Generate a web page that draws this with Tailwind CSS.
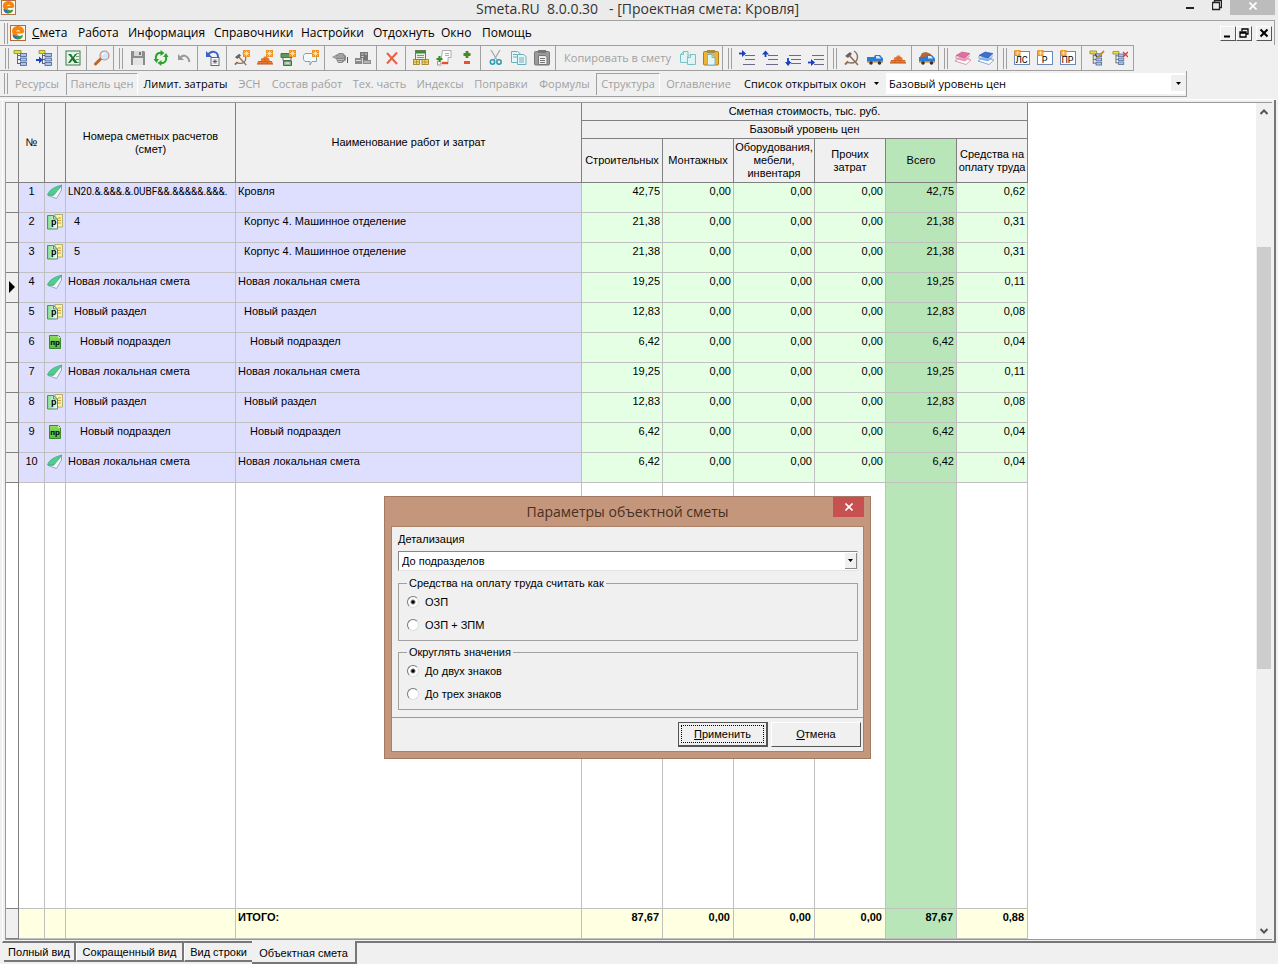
<!DOCTYPE html>
<html lang="ru">
<head>
<meta charset="utf-8">
<title>Smeta.RU 8.0.0.30 - [Проектная смета: Кровля]</title>
<script src="https://cdn.jsdelivr.net/npm/@tailwindcss/browser@4"></script>
</head>
<body class="h-screen flex flex-col overflow-hidden bg-[#f0f0f0] text-black font-['Open_Sans','Noto_Sans',sans-serif] text-[12px] leading-[16px]">

<svg class="absolute size-0" aria-hidden="true">
  <defs>
    <linearGradient id="gg" x1="0" x2="1"><stop offset="0" stop-color="#7fdc8c"/><stop offset="1" stop-color="#f4fff4"/></linearGradient>
    <linearGradient id="gd" x1="0" y1="0" x2="0" y2="1"><stop offset="0" stop-color="#8fdc5c"/><stop offset="1" stop-color="#4fbe4a"/></linearGradient>
  </defs>
  <symbol id="logo" viewBox="0 0 16 16"><rect x=".5" y=".5" width="15" height="15" fill="#fff6ea" stroke="#b5683a"/><path d="M3 9a5 5 0 0 0 10 1l-3 1-4-1z" fill="#3a9a4a"/><path d="M2.500 9.500a5 5 0 0 0 5 4.500l-1-3z" fill="#2d6fc0"/><path d="M2 6.500a6 5 0 0 1 12-1c1 2-1 3-3 3H7l1 2C4 11.500 2 9 2 6.500z" fill="#f58410"/><path d="M6 6.500c1-2 4-2 4 0z" fill="#ffe0a8"/></symbol>
  <symbol id="tree" viewBox="0 0 16 16"><path d="M1 .500h7v3H1z" fill="#e8e03a" stroke="#8a8620" stroke-width=".8"/><path d="M4.500 4v10M4.500 5.500H8M4.500 9.500H8M4.500 13.500H8" stroke="#666" fill="none"/><g fill="#a8c4ee" stroke="#4a6290" stroke-width=".8"><rect x="7.500" y="3.500" width="6" height="3"/><rect x="7.500" y="8" width="6" height="3"/><rect x="7.500" y="12.500" width="6" height="3"/></g></symbol>
  <symbol id="treein" viewBox="0 0 16 16"><path d="M3 .500h6v3H3z" fill="#e8e03a" stroke="#8a8620" stroke-width=".8"/><path d="M6.500 4v10M6.500 5.500H9M6.500 9.500H9M6.500 13.500H9" stroke="#666" fill="none"/><g fill="#a8c4ee" stroke="#4a6290" stroke-width=".8"><rect x="9" y="3.500" width="6.500" height="3"/><rect x="9" y="8" width="6.500" height="3"/><rect x="9" y="12.500" width="6.500" height="3"/></g><path d="M0 9h3V6.500L7 10l-4 3.500V11H0z" fill="#1747c8"/></symbol>
  <symbol id="xls" viewBox="0 0 16 16"><rect x="1" y="1" width="14" height="14" fill="#e8f3e8" stroke="#3c7a4c"/><path d="M11 3.500h3M11 6.500h3M11 9.500h3M11 12.500h3" stroke="#6aa878"/><path d="M3 4h3l2 3 2-3h2L9 8l4 5H9.500L7.500 10 5 13H3l3.500-5z" fill="#1a7431"/></symbol>
  <symbol id="mag" viewBox="0 0 16 16"><path d="M7 8.500 1.500 14" stroke="#c2622c" stroke-width="3" stroke-linecap="round"/><circle cx="10.500" cy="5.500" r="4.500" fill="#cfe6fb" stroke="#c98b78" stroke-width="1.200"/><path d="M8 5a3 3 0 0 1 3-2" stroke="#fff" fill="none" stroke-width="1.200"/></symbol>
  <symbol id="save" viewBox="0 0 16 16"><path d="M1 1h13l1 1v13H1z" fill="#8c8c8c"/><rect x="4" y="1" width="8" height="5" fill="#d8d8d8"/><rect x="9" y="2" width="2" height="3" fill="#777"/><rect x="3" y="8" width="10" height="7" fill="#e4e4e4"/></symbol>
  <symbol id="refresh" viewBox="0 0 16 16"><path d="M8 3H6C3 4 2.500 7 3 10M8 13h2c3-1 3.500-4 3-7" stroke="#2aa52a" stroke-width="2" fill="none"/><path d="M7.500 0l4 3-4 3zM8.500 10v6l-4-3zM.500 9h5.500l-2.500 4zM10 7h5.500L13 3z" fill="#2aa52a"/></symbol>
  <symbol id="undo" viewBox="0 0 16 16"><path d="M4 8c3-4 8-3 9.500 4" stroke="#999" stroke-width="2" fill="none"/><path d="M2 4v6h6z" fill="#999"/></symbol>
  <symbol id="undob" viewBox="0 0 16 16"><path d="M3 5c3-5 10-4 10 2" stroke="#3b62c5" stroke-width="2" fill="none"/><path d="M1 1v6h6z" fill="#3b62c5"/><rect x="6" y="7.500" width="8" height="8" fill="#fff" stroke="#667"/><path d="M8 9.500l4 4M12 9.500l-4 4M10 9v5M7.500 11.500h5" stroke="#445" stroke-width=".7"/></symbol>
  <symbol id="star" viewBox="0 0 6 6"><rect width="6" height="6" fill="#f0921e"/><path d="M3 .500v5M.500 3h5M1.200 1.200l3.600 3.600M4.800 1.200 1.200 4.800" stroke="#fff3c8" stroke-width=".6"/></symbol>
  <symbol id="hammer" viewBox="0 0 16 16"><path d="M4 4l10 11" stroke="#a8673a" stroke-width="1.600"/><path d="M1 6l5-4 2 2-4 4z" fill="#666"/><path d="M10 1c5 3 5 12-3 12-2 0-3 0-4-1.500" stroke="#777" stroke-width="1.400" fill="none"/><path d="M4 11.500l-3 3" stroke="#a8673a" stroke-width="2"/></symbol>
  <symbol id="hammern" viewBox="0 0 16 16"><use href="#hammer" y="2" width="14" height="14"/><use href="#star" x="9" width="7" height="7"/></symbol>
  <symbol id="bricks" viewBox="0 0 16 16"><path d="M0 13l1-3h2.500l1-2.500H6l1-2h3l1 2h1l1 2.500h2l1 3z" fill="#ee7e34"/><path d="M1 10.500h14M4 8h8M5 10.500V13M10 10.500V13M8 8v2.500" stroke="#b8501a" stroke-width=".6"/><path d="M0 13h16" stroke="#b8501a"/></symbol>
  <symbol id="bricksn" viewBox="0 0 16 16"><use href="#bricks" y="1" width="16" height="16"/><use href="#star" x="9" width="7" height="7"/></symbol>
  <symbol id="cabn" viewBox="0 0 16 16"><path d="M1 3.500h11v4H1z" fill="#5a9860" stroke="#456f4c"/><path d="M3 7.500h8v3H3z" fill="#f4f4e0" stroke="#667"/><path d="M3.500 11h8v4.500h-8z" fill="#84b888" stroke="#456f4c"/><path d="M5.500 13h4" stroke="#fff"/><use href="#star" x="9" width="7" height="7"/></symbol>
  <symbol id="msgn" viewBox="0 0 16 16"><path d="M2 3.500h11.500v8H9l-2 3.500v-3.500H2l-1.500-2v-4z" fill="#f3fafd" stroke="#7aa6b5"/><use href="#star" x="9" width="7" height="7"/></symbol>
  <symbol id="gray1" viewBox="0 0 16 16"><path d="M0 7l4-2 3-2h4l3 3v4l-4 3H6L4 9z" fill="#888"/><path d="M2 7h10M6 5h5M5 9.500h7M6 11.500h4" stroke="#ccc" stroke-width=".8"/><path d="M15.500 7v6" stroke="#555"/></symbol>
  <symbol id="gray2" viewBox="0 0 16 16"><path d="M5 2h8v8H5z" fill="#777"/><path d="M0 8h7v6H0zM8 10h8v4H8z" fill="#8c8c8c"/><path d="M6.500 4h2M10 4h2M6.500 6.500h2M1 10.500h5M9 12h6M7.500 8v6" stroke="#ddd"/></symbol>
  <symbol id="del" viewBox="0 0 16 16"><path d="M3 3l10 11M13 2.500 3 13.500" stroke="#ea6040" stroke-width="2"/></symbol>
  <symbol id="calc" viewBox="0 0 16 16"><rect x="2.500" y=".500" width="10" height="9" fill="#e9f2e4" stroke="#6a7a52"/><path d="M3 1h9v2.500H3z" fill="#3c8a3c"/><path d="M4 5.500h7M4 7.500h7" stroke="#889"/><g fill="#f3d96a" stroke="#9a7420" stroke-width=".8"><rect x=".500" y="9.500" width="6" height="5"/><rect x="9" y="9.500" width="6.500" height="5"/></g><path d="M1 12h5M9.500 12H15M3.500 10v4M12 10v4" stroke="#9a7420" stroke-width=".6"/></symbol>
  <symbol id="pmdoc" viewBox="0 0 16 16"><path d="M6.500.500H15v7h-3v6H4.500z" fill="#fff" stroke="#999" stroke-width=".8"/><path d="M9 3.500h4M9 5.500h4" stroke="#aac"/><path d="M3.500 6v6M.500 9h6" stroke="#3f8a22" stroke-width="2.200"/><path d="M6 13h6" stroke="#ea5030" stroke-width="2.400"/><path d="M1.500 11v4h4" stroke="#999" fill="none"/></symbol>
  <symbol id="pm" viewBox="0 0 16 16"><path d="M8 1v7M4.500 4.500h7" stroke="#4a8a22" stroke-width="2.800"/><path d="M5 12.500h6" stroke="#ea5030" stroke-width="3"/></symbol>
  <symbol id="cut" viewBox="0 0 16 16"><path d="M3 0l6 10M12 0 6 10" stroke="#a0adb2" stroke-width="1.300"/><circle cx="4.500" cy="12" r="2.200" fill="none" stroke="#2a9ab0" stroke-width="1.500"/><circle cx="11" cy="12" r="2.200" fill="none" stroke="#2a9ab0" stroke-width="1.500"/></symbol>
  <symbol id="copy" viewBox="0 0 16 16"><g fill="#e4f6f8" stroke="#6ab0ba"><path d="M.500 1.500h6l2.500 2v9H.500z"/><path d="M6.500 4.500h6l2.500 2v8H6.500z"/></g><path d="M2 4.500h4M2 7h4M8 8h5M8 10h5M8 12h5" stroke="#6ab0ba"/></symbol>
  <symbol id="copy2" viewBox="0 0 16 16"><g fill="#dff5f5" stroke="#7ac0c4"><path d="M3.500 1.500H8v11H.500v-8z"/><path d="M10 4.500h5.500v10h-8V7z"/></g><path d="M3.500 1.500v3h-3M10.500 4.500V7.500h-3" stroke="#7ac0c4" fill="none"/></symbol>
  <symbol id="pasteg" viewBox="0 0 16 16"><rect x=".500" y="1.500" width="15" height="13.500" rx="1" fill="#9a9a9a" stroke="#777"/><rect x="4" y="0" width="8" height="3" fill="#777"/><path d="M4.500 5.500h7l1.500 2v7H4.500z" fill="#eee" stroke="#777"/><path d="M6 8.500h5M6 10.500h5M6 12.500h5" stroke="#777"/></symbol>
  <symbol id="pastey" viewBox="0 0 16 16"><rect x=".500" y="1.500" width="15" height="13.500" rx="1" fill="#eeb43a" stroke="#b07c1c"/><rect x="4" y="0" width="8" height="3" fill="#a88a4a"/><path d="M4.500 4.500H9l3 3v7.500H4.500z" fill="#e2f6f6" stroke="#7ab8bc"/><path d="M9 4.500v3h3" fill="none" stroke="#7ab8bc"/></symbol>
  <symbol id="lines" viewBox="0 0 16 16"><path d="M6 5.500h10M6 9.500h10M4 14.500h12" stroke="#6a6a8a"/></symbol>
  <symbol id="l1" viewBox="0 0 16 16"><use href="#lines" width="16" height="16"/><path d="M0 3.500h4" stroke="#1a3fc0" stroke-width="1.800"/><path d="M3 0l4 3.500L3 7z" fill="#1a3fc0"/></symbol>
  <symbol id="l2" viewBox="0 0 16 16"><use href="#lines" width="16" height="16"/><path d="M3.500 3v4" stroke="#1a3fc0" stroke-width="1.800"/><path d="M0 4.500 3.500.500 7 4.500z" fill="#1a3fc0"/></symbol>
  <symbol id="l3" viewBox="0 0 16 16"><path d="M4 5.500h12M6 9.500h10M6 13.500h10" stroke="#6a6a8a"/><path d="M5 12H3V8" stroke="#1a3fc0" stroke-width="1.800" fill="none"/><path d="M0 12h6.500L3 16z" fill="#1a3fc0"/></symbol>
  <symbol id="l4" viewBox="0 0 16 16"><path d="M4 5.500h12M6 9.500h10M6 14.500h10" stroke="#6a6a8a"/><path d="M0 12.500h4" stroke="#1a3fc0" stroke-width="1.800"/><path d="M3 9l4 3.500L3 16z" fill="#1a3fc0"/></symbol>
  <symbol id="truck" viewBox="0 0 16 16"><path d="M0 7h7l1-2h5l3 3.500V12H0z" fill="#2f7ad0"/><path d="M9 6h3l2 2.500H9z" fill="#d4ecff"/><path d="M0 12h16" stroke="#e09c3a" stroke-width="1.500"/><circle cx="4" cy="13" r="1.800" fill="#333"/><circle cx="12.500" cy="13" r="1.800" fill="#333"/></symbol>
  <symbol id="truckb" viewBox="0 0 16 16"><path d="M1 7l2-4 4-1 5 2v3z" fill="#b3683a"/><use href="#truck" width="16" height="16"/></symbol>
  <symbol id="bookp" viewBox="0 0 16 16"><path d="M0 11l5-3 11 2-5 4.500z" fill="#fff" stroke="#d080a0" stroke-width=".8"/><path d="M0 9l6-2.500L15 8l-5 3.500z" fill="#f0a8c0"/><path d="M1 5.500 7 2l8 1.500-5 4.500z" fill="#e070a0" stroke="#c05080" stroke-width=".6"/><path d="M1 6v2l9 2.500 5-5" fill="none" stroke="#d890b0"/></symbol>
  <symbol id="bookb" viewBox="0 0 16 16"><path d="M0 11l5-3 11 2-5 4.500z" fill="#fff" stroke="#6a94d0" stroke-width=".8"/><path d="M0 9l6-2.500L15 8l-5 3.500z" fill="#90c0f0"/><path d="M1 5.500 7 2l8 1.500-5 4.500z" fill="#3a70d0" stroke="#2a50a8" stroke-width=".6"/><path d="M1 6v2l9 2.500 5-5" fill="none" stroke="#80a8e0"/></symbol>
  <symbol id="frame" viewBox="0 0 16 16"><rect x=".500" y="1.500" width="15" height="13" fill="#fff" stroke="#6a88b8"/><use href="#star" width="7" height="6"/></symbol>
  <symbol id="treee" viewBox="0 0 16 16"><use href="#tree" width="15" height="16"/><path d="M15 1 9 7l-1 1.500" stroke="#c98a2a" stroke-width="1.800" fill="none"/><path d="M6 4l2 3" stroke="#333"/></symbol>
  <symbol id="treex" viewBox="0 0 16 16"><use href="#tree" width="14" height="16"/><path d="M11 2l5 5M16 2l-5 5" stroke="#e03a3a" stroke-width="1.400"/></symbol>
  <symbol id="smeta" viewBox="0 0 16 16"><path d="M.500 11C2 6 7 3 15 1L7 11z" fill="#4fcf8c" stroke="#2a9a68" stroke-width=".6"/><path d="M1 11.500h5.500L14.500 2v4L9.500 14.500z" fill="#f4f9fc" stroke="#7a9aa8" stroke-width=".8"/></symbol>
  <symbol id="razdel" viewBox="0 0 16 16"><rect x="8" y=".500" width="7.500" height="12.500" fill="#fbf3a0" stroke="#a8a468" stroke-width=".8"/><path d="M11 4h3M11 6.500h3M11 9h3" stroke="#c8a040"/><path d="M.500 1.500h6l4 3.500v10H.500z" fill="url(#gg)" stroke="#5a8a70"/><path d="M6.500 1.500V5h4" fill="none" stroke="#5a8a70"/></symbol>
  <symbol id="podrazdel" viewBox="0 0 16 16"><path d="M2.500 1.500h9l2 2v11h-11z" fill="url(#gd)" stroke="#3c8a30"/><path d="M11.500 1.500v2h2" fill="none" stroke="#d8f8c0"/></symbol>
</svg>

<header class="h-5 shrink-0 flex items-start bg-[#ebebeb] pl-px">
  <svg class="size-[15px] shrink-0"><use href="#logo"/></svg>
  <h1 class="flex-1 text-center text-[14px] leading-[17px] text-[#333] whitespace-pre pl-[82px] font-normal">Smeta.RU  8.0.0.30   - [Проектная смета: Кровля]</h1>
  <div class="flex h-[15px] pr-[3px] shrink-0">
    <button aria-label="Свернуть" class="w-[26px] flex justify-center items-end pb-[6px]"><span class="w-2 h-[2px] bg-[#222]"></span></button>
    <button aria-label="Восстановить" class="w-[27px] flex justify-center items-center pb-1"><svg class="w-[10px] h-[11px]" viewBox="0 0 10 11"><path d="M2.500 2V.500h7v7H8M.500 2.500h7v7h-7z" fill="none" stroke="#222" stroke-width="1.300"/></svg></button>
    <button aria-label="Закрыть" class="w-[45px] bg-[#bcbcbc] flex justify-center items-center pb-1"><svg class="size-2" viewBox="0 0 8 8"><path d="M.500.500l7 7M7.500.500l-7 7" stroke="#fff" stroke-width="1.600"/></svg></button>
  </div>
</header>

<nav class="h-[25px] shrink-0 flex items-center border-t border-[#a0a0a0] mr-[3px] border-r pl-1">
  <span class="w-1 h-[21px] border-x border-[#a0a0a0] mr-[2px]"></span>
  <svg class="size-4 mr-[6px]"><use href="#logo"/></svg>
  <div class="flex gap-3 text-[12px]">
    <button class="w-[34px] whitespace-nowrap"><u>С</u>мета</button>
    <button class="w-[38px] whitespace-nowrap">Работа</button>
    <button class="w-[74px] whitespace-nowrap">Информация</button>
    <button class="w-[75px] whitespace-nowrap">Справочники</button>
    <button class="w-[60px] whitespace-nowrap">Настройки</button>
    <button class="w-[56px] whitespace-nowrap">Отдохнуть</button>
    <button class="w-[29px] whitespace-nowrap">Окно</button>
    <button class="w-[49px] whitespace-nowrap">Помощь</button>
  </div>
  <div class="ml-auto flex pr-[2px] [&>button]:w-4 [&>button]:h-[15px] [&>button]:border [&>button]:border-t-white [&>button]:border-l-white [&>button]:border-r-[#555] [&>button]:border-b-[#555] [&>button]:flex [&>button]:items-center [&>button]:justify-center">
    <button aria-label="Свернуть окно"><svg class="size-[10px]" viewBox="0 0 10 10"><path d="M1 8.500h6" stroke="#000" stroke-width="2"/></svg></button>
    <button aria-label="Восстановить окно"><svg class="size-[10px]" viewBox="0 0 10 10"><path d="M3 3V1h6v5H7M1 4h6v5H1zM1 5h6" fill="none" stroke="#000" stroke-width="1.300"/></svg></button>
    <button aria-label="Закрыть окно" class="ml-1"><svg class="size-[10px]" viewBox="0 0 10 10"><path d="M1.500 1.500l7 7M8.500 1.500l-7 7" stroke="#000" stroke-width="2"/></svg></button>
  </div>
</nav>

<div class="h-[26px] shrink-0 self-start flex border-y border-[#a0a0a0] border-r pr-[2px] text-[11px] [&_button]:w-[23px] [&_button]:shrink-0 [&_button]:flex [&_button]:items-center [&_button]:justify-center [&_svg]:size-4 [&>i]:w-px [&>i]:shrink-0 [&>i]:ml-[2px] [&>i]:mr-[3px] [&>i]:bg-[#a0a0a0] [&>b]:w-[13px] [&>b]:shrink-0 [&>b]:border-l [&>b]:border-[#a0a0a0] [&>b]:flex [&>b]:items-center [&>b]:pl-[5px] [&>b>span]:w-1 [&>b>span]:h-[21px] [&>b>span]:border-x [&>b>span]:border-[#a0a0a0]">
  <b class="-ml-px"><span></span></b>
  <button aria-label="Дерево" class="-ml-[3px]"><svg><use href="#tree"/></svg></button>
  <button aria-label="Перейти в дерево"><svg><use href="#treein"/></svg></button>
  <i></i>
  <button aria-label="Excel"><svg><use href="#xls"/></svg></button>
  <i></i>
  <button aria-label="Поиск"><svg><use href="#mag"/></svg></button>
  <b><span></span></b>
  <button aria-label="Сохранить"><svg><use href="#save"/></svg></button>
  <button aria-label="Обновить"><svg><use href="#refresh"/></svg></button>
  <button aria-label="Отменить"><svg><use href="#undo"/></svg></button>
  <i></i>
  <button aria-label="Откат"><svg><use href="#undob"/></svg></button>
  <i></i>
  <button aria-label="Новая расценка"><svg><use href="#hammern"/></svg></button>
  <button aria-label="Новый материал"><svg><use href="#bricksn"/></svg></button>
  <button aria-label="Новое оборудование"><svg><use href="#cabn"/></svg></button>
  <button aria-label="Новый комментарий"><svg><use href="#msgn"/></svg></button>
  <i></i>
  <button aria-label="Замена"><svg><use href="#gray1"/></svg></button>
  <button aria-label="Группа"><svg><use href="#gray2"/></svg></button>
  <i></i>
  <button aria-label="Удалить"><svg><use href="#del"/></svg></button>
  <i></i>
  <button aria-label="Расчёт"><svg><use href="#calc"/></svg></button>
  <button aria-label="Изменить"><svg><use href="#pmdoc"/></svg></button>
  <button aria-label="Плюс минус"><svg><use href="#pm"/></svg></button>
  <i></i>
  <button aria-label="Вырезать"><svg><use href="#cut"/></svg></button>
  <button aria-label="Копировать"><svg><use href="#copy"/></svg></button>
  <button aria-label="Вставить"><svg><use href="#pasteg"/></svg></button>
  <i></i>
  <div class="w-[117px] shrink-0 flex items-center justify-center whitespace-nowrap text-[#a0a0a0]">Копировать в смету</div>
  <button aria-label="Копия"><svg><use href="#copy2"/></svg></button>
  <button aria-label="Вставка"><svg><use href="#pastey"/></svg></button>
  <b><span></span></b>
  <button aria-label="Вправо выше"><svg><use href="#l1"/></svg></button>
  <button aria-label="Вверх"><svg><use href="#l2"/></svg></button>
  <button aria-label="Вниз"><svg><use href="#l3"/></svg></button>
  <button aria-label="Вправо ниже"><svg><use href="#l4"/></svg></button>
  <b><span></span></b>
  <button aria-label="Работы"><svg><use href="#hammer"/></svg></button>
  <button aria-label="Машины"><svg><use href="#truck"/></svg></button>
  <button aria-label="Материалы"><svg><use href="#bricks"/></svg></button>
  <i></i>
  <button aria-label="Перевозка"><svg><use href="#truckb"/></svg></button>
  <b><span></span></b>
  <button aria-label="Справочник 1"><svg><use href="#bookp"/></svg></button>
  <button aria-label="Справочник 2"><svg><use href="#bookb"/></svg></button>
  <b><span></span></b>
  <button aria-label="Локальная смета" class="relative"><svg><use href="#frame"/></svg><span class="absolute bottom-[5px] inset-x-0 text-center text-[9px] leading-[10px] font-[Roboto]">ЛС</span></button>
  <button aria-label="Раздел" class="relative"><svg><use href="#frame"/></svg><span class="absolute bottom-[5px] inset-x-0 text-center text-[9px] leading-[10px] font-[Roboto]">Р</span></button>
  <button aria-label="Подраздел" class="relative"><svg><use href="#frame"/></svg><span class="absolute bottom-[5px] inset-x-0 text-center text-[9px] leading-[10px] font-[Roboto]">ПР</span></button>
  <i></i>
  <button aria-label="Правка структуры"><svg><use href="#treee"/></svg></button>
  <button aria-label="Удалить структуру"><svg><use href="#treex"/></svg></button>
</div>

<div class="h-[26px] shrink-0 flex items-center border-b border-r border-[#a0a0a0] w-[1187px] pl-1 text-[11px] text-[#a0a0a0] [&>button]:shrink-0 [&>button]:whitespace-nowrap [&>button]:h-[22px]">
  <span class="w-1 h-[21px] border-x border-[#a0a0a0] shrink-0"></span>
  <button class="w-[58px]">Ресурсы</button>
  <button class="w-[72px] border-t border-l border-[#a0a0a0] border-r border-r-white">Панель цен</button>
  <button class="w-[95px] text-black">Лимит. затраты</button>
  <button class="w-[33px]">ЭСН</button>
  <button class="w-[82px]">Состав работ</button>
  <button class="w-[63px]">Тех. часть</button>
  <button class="w-[58px]">Индексы</button>
  <button class="w-[64px]">Поправки</button>
  <button class="w-[63px]">Формулы</button>
  <button class="w-[64px] border-t border-l border-[#a0a0a0] border-r border-r-white">Структура</button>
  <button class="w-[77px]">Оглавление</button>
  <button class="w-[149px] text-black flex items-center justify-center gap-2">Список открытых окон<svg class="w-[5px] h-[3px]" viewBox="0 0 5 3"><path d="M0 0h5L2.500 3z"/></svg></button>
  <div class="relative flex-1 h-[21px] mr-[1px]">
    <select aria-label="Уровень цен" class="appearance-none w-full h-full bg-white text-black pl-[3px] outline-none"><option>Базовый уровень цен</option></select>
    <span class="absolute right-0 top-[2px] w-[14px] h-4 bg-[#f0f0f0] flex items-center justify-center pointer-events-none"><svg class="w-[5px] h-[3px]" viewBox="0 0 5 3"><path d="M0 0h5L2.500 3z" fill="#000"/></svg></span>
  </div>
</div>

<main class="flex-1 min-h-0 flex flex-col mt-[2px] border-t border-white mr-[2px] font-['Liberation_Sans',Arial,sans-serif] text-[11px] leading-[13px]">
  <div class="flex-1 min-h-0 flex ml-[2px] border-l border-white border-r-2 border-r-[#777] border-b-2 border-b-[#777]">
    <div class="flex-1 min-w-0 flex mt-[2px] ml-[2px] mr-[2px] mb-px border border-[#999] border-r-0 bg-white">
      <div class="flex-1 min-w-0 overflow-hidden">
        <table class="h-full w-[1022px] table-fixed border-separate border-spacing-0 [&_td]:border-r [&_td]:border-b [&_td]:border-[#c0c0c0] [&_td]:align-top [&_td]:px-[2px] [&_td]:pt-[2px] [&_td]:whitespace-nowrap [&_td]:overflow-hidden [&_th]:font-normal [&_th]:border-r [&_th]:border-b [&_th]:border-[#808080] [&_th]:bg-[#f0f0f0] [&_th]:p-0 [&_tr>td:first-child]:bg-[#f0f0f0] [&_tr>td:first-child]:border-[#808080] [&_.r>td:nth-child(2)]:text-center [&_.r>td:nth-child(3)]:p-0 [&_.r>td:nth-child(3)]:pt-px [&_.r>td:nth-child(-n+5)]:bg-[#dedeff] [&_.r>td:first-child]:bg-[#f0f0f0]! [&_.r>td:nth-child(n+6)]:bg-[#e4ffe4] [&_.r>td:nth-child(n+6)]:text-right [&_tr>td:nth-child(10)]:bg-[#b9e6b9]! [&_td_svg]:mx-auto [&_td_svg]:size-4">
          <colgroup><col class="w-[13px]"><col class="w-[26px]"><col class="w-[21px]"><col class="w-[170px]"><col class="w-[346px]"><col class="w-[81px]"><col class="w-[71px]"><col class="w-[81px]"><col class="w-[71px]"><col class="w-[71px]"><col class="w-[71px]"></colgroup>
          <thead>
            <tr class="h-[18px]"><th rowspan="3"></th><th rowspan="3">№</th><th rowspan="3"></th><th rowspan="3">Номера сметных расчетов<br>(смет)</th><th rowspan="3">Наименование работ и затрат</th><th colspan="6">Сметная стоимость, тыс. руб.</th></tr>
            <tr class="h-[18px]"><th colspan="6">Базовый уровень цен</th></tr>
            <tr class="h-[44px]"><th>Строительных</th><th>Монтажных</th><th>Оборудования,<br>мебели,<br>инвентаря</th><th>Прочих<br>затрат</th><th><div class="h-[43px] bg-[#b9e6b9] flex items-center justify-center">Всего</div></th><th>Средства на<br>оплату труда</th></tr>
          </thead>
          <tbody>
            <tr class="r h-[30px]"><td></td><td>1</td><td><svg><use href="#smeta"/></svg></td><td class="font-[Roboto] text-[10px]">LN20.&amp;.&amp;&amp;&amp;.&amp;.0UBF&amp;&amp;.&amp;&amp;&amp;&amp;&amp;.&amp;&amp;&amp;.</td><td>Кровля</td><td>42,75</td><td>0,00</td><td>0,00</td><td>0,00</td><td>42,75</td><td>0,62</td></tr>
            <tr class="r h-[30px]"><td></td><td>2</td><td><div class="relative"><svg><use href="#razdel"/></svg><span class="absolute left-[6px] top-[3px] text-[9px] leading-[11px] font-bold">р</span></div></td><td><span class="pl-[6px]">4</span></td><td><span class="pl-[6px]">Корпус 4. Машинное отделение</span></td><td>21,38</td><td>0,00</td><td>0,00</td><td>0,00</td><td>21,38</td><td>0,31</td></tr>
            <tr class="r h-[30px]"><td></td><td>3</td><td><div class="relative"><svg><use href="#razdel"/></svg><span class="absolute left-[6px] top-[3px] text-[9px] leading-[11px] font-bold">р</span></div></td><td><span class="pl-[6px]">5</span></td><td><span class="pl-[6px]">Корпус 4. Машинное отделение</span></td><td>21,38</td><td>0,00</td><td>0,00</td><td>0,00</td><td>21,38</td><td>0,31</td></tr>
            <tr class="r h-[30px]"><td><svg class="mt-1 w-[6px]!" viewBox="0 0 6 16"><path d="M0 2v12l6-6z"/></svg></td><td>4</td><td><svg><use href="#smeta"/></svg></td><td>Новая локальная смета</td><td>Новая локальная смета</td><td>19,25</td><td>0,00</td><td>0,00</td><td>0,00</td><td>19,25</td><td>0,11</td></tr>
            <tr class="r h-[30px]"><td></td><td>5</td><td><div class="relative"><svg><use href="#razdel"/></svg><span class="absolute left-[6px] top-[3px] text-[9px] leading-[11px] font-bold">р</span></div></td><td><span class="pl-[6px]">Новый раздел</span></td><td><span class="pl-[6px]">Новый раздел</span></td><td>12,83</td><td>0,00</td><td>0,00</td><td>0,00</td><td>12,83</td><td>0,08</td></tr>
            <tr class="r h-[30px]"><td></td><td>6</td><td><div class="relative"><svg><use href="#podrazdel"/></svg><span class="absolute inset-x-0 text-center top-[3px] text-[8px] leading-[11px] font-bold">пр</span></div></td><td><span class="pl-3">Новый подраздел</span></td><td><span class="pl-3">Новый подраздел</span></td><td>6,42</td><td>0,00</td><td>0,00</td><td>0,00</td><td>6,42</td><td>0,04</td></tr>
            <tr class="r h-[30px]"><td></td><td>7</td><td><svg><use href="#smeta"/></svg></td><td>Новая локальная смета</td><td>Новая локальная смета</td><td>19,25</td><td>0,00</td><td>0,00</td><td>0,00</td><td>19,25</td><td>0,11</td></tr>
            <tr class="r h-[30px]"><td></td><td>8</td><td><div class="relative"><svg><use href="#razdel"/></svg><span class="absolute left-[6px] top-[3px] text-[9px] leading-[11px] font-bold">р</span></div></td><td><span class="pl-[6px]">Новый раздел</span></td><td><span class="pl-[6px]">Новый раздел</span></td><td>12,83</td><td>0,00</td><td>0,00</td><td>0,00</td><td>12,83</td><td>0,08</td></tr>
            <tr class="r h-[30px]"><td></td><td>9</td><td><div class="relative"><svg><use href="#podrazdel"/></svg><span class="absolute inset-x-0 text-center top-[3px] text-[8px] leading-[11px] font-bold">пр</span></div></td><td><span class="pl-3">Новый подраздел</span></td><td><span class="pl-3">Новый подраздел</span></td><td>6,42</td><td>0,00</td><td>0,00</td><td>0,00</td><td>6,42</td><td>0,04</td></tr>
            <tr class="r h-[30px]"><td></td><td>10</td><td><svg><use href="#smeta"/></svg></td><td>Новая локальная смета</td><td>Новая локальная смета</td><td>6,42</td><td>0,00</td><td>0,00</td><td>0,00</td><td>6,42</td><td>0,04</td></tr>
            <tr><td class="bg-white!"></td><td></td><td></td><td></td><td></td><td></td><td></td><td></td><td></td><td></td><td></td></tr>
          </tbody>
          <tfoot>
            <tr class="h-[30px] font-bold bg-[#ffffe1] [&>td:nth-child(n+6)]:text-right [&>td:nth-child(n+6)]:pr-[3px]"><td></td><td></td><td></td><td></td><td>ИТОГО:</td><td>87,67</td><td>0,00</td><td>0,00</td><td>0,00</td><td>87,67</td><td>0,88</td></tr>
          </tfoot>
        </table>
      </div>
      <div class="w-4 shrink-0 bg-[#f0f0f0] flex flex-col items-center">
        <button aria-label="Прокрутить вверх" class="h-[17px] flex items-center"><svg class="w-2 h-[6px]" viewBox="0 0 8 6"><path d="M.500 5 4 1.500 7.500 5" fill="none" stroke="#555" stroke-width="2"/></svg></button>
        <div class="flex-1 w-full flex flex-col"><div class="grow-[127]"></div><div class="grow-[421] mx-px bg-[#cdcdcd]"></div><div class="grow-[253]"></div></div>
        <button aria-label="Прокрутить вниз" class="h-[17px] flex items-center"><svg class="w-2 h-[6px]" viewBox="0 0 8 6"><path d="M.500 1 4 4.500 7.500 1" fill="none" stroke="#555" stroke-width="2"/></svg></button>
      </div>
    </div>
  </div>
  <div role="tablist" class="h-[21px] shrink-0 flex items-start pl-1 [&>button]:whitespace-nowrap [&>button]:border-r-2 [&>button]:border-b-2 [&>button]:border-[#777] [&>button]:h-[19px] [&>button]:pt-px">
    <button role="tab" class="w-[72px]">Полный вид</button>
    <button role="tab" class="w-[108px] border-l border-l-white!">Сокращенный вид</button>
    <button role="tab" class="w-[68px] border-r-0! border-l border-l-white!">Вид строки</button>
    <button role="tab" aria-selected="true" class="w-[105px] h-[23px]! -mt-[2px] pt-1! bg-[#f0f0f0] relative">Объектная смета</button>
  </div>
</main>

<div role="dialog" aria-labelledby="dt" class="absolute left-[384px] top-[496px] w-[487px] bg-[#c4967b] border border-[#a27a64] px-[6px] pb-[6px] font-['Liberation_Sans',Arial,sans-serif] text-[11px] leading-[13px]">
  <h2 id="dt" class="h-[29px] text-center text-[14px] leading-[29px] text-[#48301f] font-normal font-['Open_Sans','Noto_Sans',sans-serif]">Параметры объектной сметы</h2>
  <button aria-label="Закрыть диалог" class="absolute right-[6px] top-0 w-[31px] h-5 bg-[#c75050] flex items-center justify-center"><svg class="size-2" viewBox="0 0 8 8"><path d="M.500.500l7 7M7.500.500l-7 7" stroke="#fff" stroke-width="1.600"/></svg></button>
  <form class="bg-[#f0f0f0] border border-[#a98068]">
    <div class="pl-[6px] pr-[5px] pt-[6px] pb-[7px] flex flex-col">
      <label for="det">Детализация</label>
      <div class="relative mt-[5px] h-5">
        <select id="det" class="appearance-none w-full h-full bg-white border border-t-[#888] border-l-[#888] border-r-[#e3e3e3] border-b-[#e3e3e3] pl-[3px] outline-none"><option>До подразделов</option></select>
        <span class="absolute right-px top-[2px] w-3 h-4 bg-[#f0f0f0] border-r border-b border-[#888] flex items-center justify-center pointer-events-none"><svg class="w-[5px] h-[3px]" viewBox="0 0 5 3"><path d="M0 0h5L2.500 3z"/></svg></span>
      </div>
      <fieldset class="mt-[6px] h-16 border border-[#a0a0a0] pl-2">
        <legend class="px-[2px]">Средства на оплату труда считать как</legend>
        <label class="flex items-center gap-[6px] h-[23px] pt-px"><input type="radio" name="pay" checked class="appearance-none size-3 rounded-full bg-white border border-t-[#777] border-l-[#777] border-r-[#ddd] border-b-[#ddd] checked:bg-[radial-gradient(circle,#000_0_1px,#fff_3px)]">ОЗП</label>
        <label class="flex items-center gap-[6px] h-[23px] pt-px"><input type="radio" name="pay" class="appearance-none size-3 rounded-full bg-white border border-t-[#777] border-l-[#777] border-r-[#ddd] border-b-[#ddd] checked:bg-[radial-gradient(circle,#000_0_1px,#fff_3px)]">ОЗП + ЗПМ</label>
      </fieldset>
      <fieldset class="mt-[5px] h-16 border border-[#a0a0a0] pl-2">
        <legend class="px-[2px]">Округлять значения</legend>
        <label class="flex items-center gap-[6px] h-[23px] pt-px"><input type="radio" name="rnd" checked class="appearance-none size-3 rounded-full bg-white border border-t-[#777] border-l-[#777] border-r-[#ddd] border-b-[#ddd] checked:bg-[radial-gradient(circle,#000_0_1px,#fff_3px)]">До двух знаков</label>
        <label class="flex items-center gap-[6px] h-[23px] pt-px"><input type="radio" name="rnd" class="appearance-none size-3 rounded-full bg-white border border-t-[#777] border-l-[#777] border-r-[#ddd] border-b-[#ddd] checked:bg-[radial-gradient(circle,#000_0_1px,#fff_3px)]">До трех знаков</label>
      </fieldset>
    </div>
    <div class="border-t border-[#999] flex justify-end gap-[3px] pt-1 pr-[2px] pb-[4px]">
      <button type="button" class="w-[90px] h-[25px] border border-[#555] border-r-2 border-b-2 p-[2px]"><span class="flex h-full items-center justify-center border border-dotted border-black"><span><u>П</u>рименить</span></span></button>
      <button type="button" class="w-[90px] h-[25px] border border-t-white border-l-white border-r-[#555] border-b-[#555]"><u>О</u>тмена</button>
    </div>
  </form>
</div>
</body>
</html>
